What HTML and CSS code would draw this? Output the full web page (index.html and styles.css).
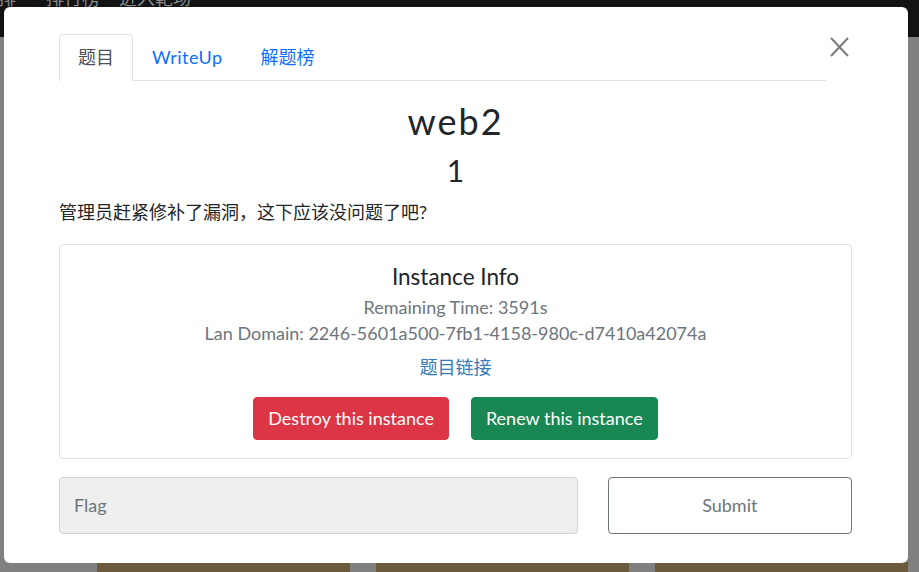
FILE: index.html
```html
<!DOCTYPE html>
<html lang="zh">
<head>
<meta charset="utf-8">
<title>web2</title>
<link rel="stylesheet" href="styles.css">
</head>
<body>
<div class="topbar">
  <span class="nav-item n1">排</span>
  <span class="nav-item n2">排行榜</span>
  <span class="nav-item n3">进入靶场</span>
</div>
<div class="cards">
  <div class="card"></div>
  <div class="card"></div>
  <div class="card"></div>
</div>

<div class="modal">
  <div class="modal-header">
    <ul class="tabs">
      <li class="tab active">题目</li>
      <li class="tab tab-latin">WriteUp</li>
      <li class="tab">解题榜</li>
    </ul>
    <button class="close" aria-label="Close">
      <svg width="19" height="20" viewBox="0 0 19 20"><path d="M1 1 L18 19 M18 1 L1 19" stroke="#7b7b7b" stroke-width="2" fill="none"/></svg>
    </button>
  </div>
  <div class="modal-body">
    <h2 class="title">web2</h2>
    <h3 class="score">1</h3>
    <p class="desc">管理员赶紧修补了漏洞，这下应该没问题了吧?</p>
    <div class="instance">
      <h4 class="inst-title">Instance Info</h4>
      <p class="muted">Remaining Time: 3591s</p>
      <p class="muted">Lan Domain: 2246-5601a500-7fb1-4158-980c-d7410a42074a</p>
      <p class="link-line"><a class="link">题目链接</a></p>
      <div class="actions">
        <button class="btn btn-danger">Destroy this instance</button>
        <button class="btn btn-success">Renew this instance</button>
      </div>
    </div>
    <div class="submit-row">
      <div class="col-input"><div class="flag-input">Flag</div></div>
      <div class="col-btn"><button class="btn-submit">Submit</button></div>
    </div>
  </div>
</div>
</body>
</html>
```

FILE: styles.css
```css
html, body {
  margin: 0;
  padding: 0;
}
body {
  background: #808080;
  font-family: Lato, "Noto Sans CJK SC", sans-serif;
  overflow: hidden;
  height: 572px;
}
.topbar {
  height: 37px;
  background: #111315;
  display: flex;
  align-items: flex-start;
  overflow: hidden;
  color: #8a8c8e;
  font-size: 18px;
  line-height: 18px;
}
.nav-item {
  margin-top: -11px;
}
.n1 { margin-left: -2px; }
.n2 { margin-left: 30px; }
.n3 { margin-left: 19px; }

.cards {
  display: flex;
  gap: 26px;
  padding-left: 97px;
  margin-top: 525px;
}
.card {
  flex: 0 0 253px;
  height: 40px;
  background: #6b5a3b;
}

.modal {
  position: fixed;
  left: 4px;
  top: 7px;
  width: 904px;
  background: #fff;
  border-radius: 6px;
  color: #212529;
}
.modal-header {
  display: flex;
  align-items: flex-start;
  padding: 27px 59px 0 55px;
}
.tabs {
  flex: 1;
  display: flex;
  list-style: none;
  margin: 0;
  padding: 0;
  border-bottom: 1px solid #dee2e6;
}
.tab {
  font-size: 18px;
  line-height: 27px;
  padding: 9px 18px;
  border: 1px solid transparent;
  border-bottom: none;
  border-radius: 4px 4px 0 0;
  color: #0d6efd;
  margin-bottom: -1px;
}
.tab-latin {
  letter-spacing: 0.45px;
}
.tab.active {
  color: #495057;
  border-color: #dee2e6;
  background: #fff;
  padding-bottom: 10px;
}
.close {
  border: 0;
  background: none;
  padding: 0;
  margin: 3px 0 0 4px;
  width: 19px;
  height: 20px;
  display: block;
}
.close svg { display: block; }

.modal-body {
  padding: 0 56px 29px 55px;
}
.title {
  margin: 19px 0 0;
  text-align: center;
  font-size: 36px;
  line-height: 43px;
  font-weight: 400;
  letter-spacing: 2px;
}
.score {
  margin: 9px 0 0;
  text-align: center;
  font-size: 30px;
  line-height: 36px;
  font-weight: 400;
}
.desc {
  margin: 11px 0 18px;
  font-size: 18px;
  line-height: 27px;
}
.instance {
  border: 1px solid #dee2e6;
  border-radius: 4px;
  padding: 18px 16px 18px;
  text-align: center;
}
.inst-title {
  margin: 0 0 4px;
  font-size: 22.5px;
  line-height: 27px;
  font-weight: 400;
}
.muted {
  margin: 0 0 -1px;
  font-size: 18px;
  line-height: 27px;
  color: #6c757d;
}
.link-line {
  margin: 8px 0 0;
  font-size: 18px;
  line-height: 27px;
}
.link {
  color: #337ab7;
}
.actions {
  display: flex;
  justify-content: center;
  gap: 22px;
  margin-top: 16px;
}
.btn {
  box-sizing: border-box;
  height: 43px;
  font-family: inherit;
  font-size: 18px;
  line-height: 27px;
  padding: 7px 14px;
  border: 1px solid transparent;
  border-radius: 4px;
  color: #fff;
}
.btn-danger { background: #dc3545; border-color: #dc3545; }
.btn-success { background: #198754; border-color: #198754; }

.submit-row {
  display: flex;
  margin: 18px -15px 0;
}
.col-input {
  flex: 0 0 66.6667%;
  box-sizing: border-box;
  padding: 0 15px;
}
.col-btn {
  flex: 0 0 33.3333%;
  box-sizing: border-box;
  padding: 0 15px;
}
.flag-input {
  box-sizing: border-box;
  height: 57px;
  background: #efefef;
  border: 1px solid #ced4da;
  border-radius: 4px;
  padding: 14px 14px;
  font-size: 18px;
  line-height: 27px;
  color: #6c757d;
}
.btn-submit {
  display: block;
  width: 100%;
  height: 57px;
  box-sizing: border-box;
  background: #fff;
  border: 1px solid #6c757d;
  border-radius: 4px;
  font-family: inherit;
  font-size: 18px;
  line-height: 27px;
  color: #6c757d;
}
```
